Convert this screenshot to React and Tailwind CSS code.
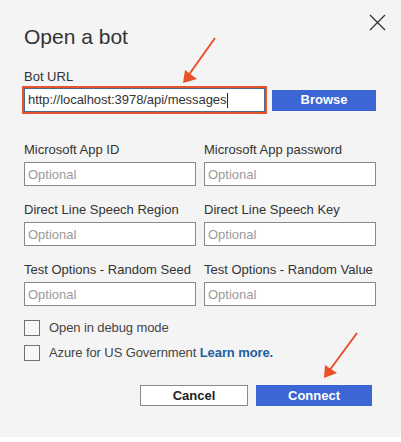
import React from "react";

// ── Small labelled text field ────────────────────────────────────────────────
const Field = ({ label }) => (
  <div className="flex flex-col gap-[4px] w-[172px]">
    <span className="text-[13px] leading-[16px] text-[#333]">{label}</span>
    <input
      placeholder="Optional"
      className="h-[24px] w-full bg-white border border-[#8a8a8a] px-[3px] text-[13px] text-[#333] placeholder:text-[#9a9a9a] outline-none"
    />
  </div>
);

const Checkbox = ({ children }) => (
  <label className="flex items-center gap-[9px] h-[16px]">
    <span className="w-[16px] h-[16px] border border-[#707070] bg-[#f7f7f7] shrink-0" />
    <span className="text-[13px] leading-[16px] text-[#444] tracking-[-0.1px]">{children}</span>
  </label>
);

const App = () => {
  const rows = [
    ["Microsoft App ID", "Microsoft App password"],
    ["Direct Line Speech Region", "Direct Line Speech Key"],
    ["Test Options - Random Seed", "Test Options - Random Value"],
  ];

  return (
    <div
      className="relative w-[401px] h-[442px] bg-white overflow-hidden"
      style={{ fontFamily: '"Liberation Sans", Arial, sans-serif' }}
    >
      <div className="h-[437px] bg-[#f4f4f4] pl-[24px] pr-[25px] pt-[14px]">
        {/* Header */}
        <div className="flex justify-between items-start h-[35px]">
          <h1 className="mt-[11px] text-[21px] leading-[24px] text-[#333]">Open a bot</h1>
          <button className="w-[17px] h-[17px] mr-[-10px] text-[#333]" aria-label="Close">
            <svg viewBox="0 0 17 17" className="w-[17px] h-[17px]">
              <path d="M1 1 L16 16 M16 1 L1 16" stroke="#333" strokeWidth="1.3" fill="none" />
            </svg>
          </button>
        </div>

        {/* Bot URL */}
        <div className="mt-[20px] flex flex-col gap-[3px]">
          <span className="text-[13px] leading-[16px] text-[#333]">Bot URL</span>
          <div className="flex items-center gap-[7px]">
            <div className="relative w-[241px] h-[24px] bg-white border border-[#4a6b8a] outline-2 outline-[#e8532b] flex items-center px-[3px]">
              <span className="text-[13px] text-[#333] whitespace-nowrap tracking-[-0.05px]">http://localhost:3978/api/messages</span>
              <span className="w-px h-[15px] bg-[#222] ml-[1px]" />
            </div>
            <button className="w-[104px] h-[21px] bg-[#3b66d4] text-white text-[13px] font-bold">
              Browse
            </button>
          </div>
        </div>

        {/* Optional fields */}
        <div className="mt-[30px] flex flex-col gap-[16px]">
          {rows.map(([a, b]) => (
            <div key={a} className="flex gap-[8px]">
              <Field label={a} />
              <Field label={b} />
            </div>
          ))}
        </div>

        {/* Checkboxes */}
        <div className="mt-[14px] flex flex-col gap-[9px]">
          <Checkbox>Open in debug mode</Checkbox>
          <Checkbox>
            Azure for US Government{" "}
            <a className="font-bold text-[#1f5f9e]">Learn more.</a>
          </Checkbox>
        </div>

        {/* Footer buttons */}
        <div className="mt-[24px] flex justify-end gap-[8px] pr-[4px]">
          <button className="w-[108px] h-[21px] bg-white border border-[#8a8a8a] text-[13px] font-bold text-[#222]">
            Cancel
          </button>
          <button className="w-[116px] h-[21px] bg-[#3b66d4] text-[13px] font-bold text-white">
            Connect
          </button>
        </div>
      </div>

      {/* Annotation arrows */}
      <svg className="absolute inset-0 pointer-events-none" width="401" height="442">
        <line x1="215" y1="38" x2="188" y2="76" stroke="#e9512a" strokeWidth="2" />
        <polygon points="183,83 185,70 197,79" fill="#e9512a" />
        <line x1="357" y1="333" x2="329" y2="371" stroke="#e9512a" strokeWidth="2" />
        <polygon points="324,378 325,365 337,373" fill="#e9512a" />
      </svg>
    </div>
  );
};

export default App;
